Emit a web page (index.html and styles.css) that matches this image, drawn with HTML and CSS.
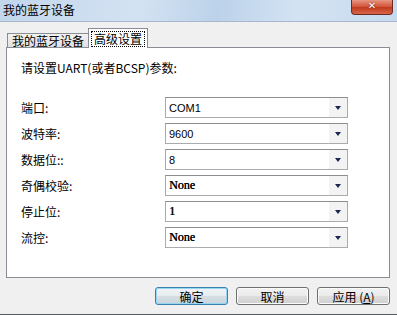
FILE: index.html
```html
<!DOCTYPE html>
<html>
<head>
    <title>我的蓝牙设备</title>
    <link rel="stylesheet" href="styles.css">
</head>
<body>
    <div id="window">
        <div class="titlebar">
            <span class="title">我的蓝牙设备</span>
            <span class="close">&#x2715;</span>
        </div>
        <div class="client">
            <div class="tabs">
                <div class="tab">我的蓝牙设备</div>
                <div class="tab active"><span class="focus">高级设置</span></div>
            </div>
            <div class="panel">
                <div class="intro">请设置UART(或者BCSP)参数:</div>
                <div class="fields">
                    <div class="row">
                        <span class="label">端口:</span>
                        <div class="combo"><span class="value sans">COM1</span><span class="arrow"></span></div>
                    </div>
                    <div class="row">
                        <span class="label">波特率:</span>
                        <div class="combo"><span class="value sans">9600</span><span class="arrow"></span></div>
                    </div>
                    <div class="row">
                        <span class="label">数据位::</span>
                        <div class="combo"><span class="value sans">8</span><span class="arrow"></span></div>
                    </div>
                    <div class="row">
                        <span class="label">奇偶校验:</span>
                        <div class="combo"><span class="value serif">None</span><span class="arrow"></span></div>
                    </div>
                    <div class="row">
                        <span class="label">停止位:</span>
                        <div class="combo"><span class="value serif">1</span><span class="arrow"></span></div>
                    </div>
                    <div class="row">
                        <span class="label">流控:</span>
                        <div class="combo"><span class="value serif">None</span><span class="arrow"></span></div>
                    </div>
                </div>
            </div>
            <div class="buttons">
                <button class="default">确定</button>
                <button>取消</button>
                <button>应用 (<u>A</u>)</button>
            </div>
        </div>
    </div>
</body>
</html>
```

FILE: styles.css
```css
body {
    margin: 0;
    font-family: "Noto Sans CJK SC", "Liberation Sans", sans-serif;
    font-size: 12px;
    color: #000;
    background-color: #f0f0f0;
}
#window {
    width: 397px;
    height: 315px;
    box-sizing: border-box;
    border-bottom: 1px solid #555b63;
    display: flex;
    flex-direction: column;
}
.titlebar {
    height: 22px;
    box-sizing: border-box;
    border-bottom: 1px solid #a8b8cc;
    background: linear-gradient(100deg, #c2d6ec 0%, #d3e2f2 35%, #bcd2ea 55%, #d4e3f3 75%, #c6d9ee 100%);
    display: flex;
    align-items: center;
    justify-content: space-between;
}
.title {
    margin-left: 3px;
    margin-top: -2px;
    font-size: 12px;
    line-height: 16px;
}
.close {
    align-self: flex-start;
    width: 42px;
    height: 16px;
    margin-top: -1px;
    margin-right: 4px;
    box-sizing: border-box;
    border: 1px solid #6b2b22;
    border-top: none;
    border-radius: 0 0 4px 4px;
    background: linear-gradient(#e9a08f, #d4553a 50%, #c03a1e 55%, #d86448);
    color: #fff;
    font-family: "DejaVu Sans", sans-serif;
    font-weight: bold;
    font-size: 10px;
    line-height: 14px;
    text-align: center;
    text-shadow: 0 0 2px #5a1a10;
}
.client {
    flex: 1;
    display: flex;
    flex-direction: column;
    padding: 6px 7px 0 6px;
}
.tabs {
    display: flex;
    align-items: flex-end;
    height: 20px;
    padding-left: 1px;
    position: relative;
    z-index: 1;
    margin-bottom: -1px;
}
.tab {
    height: 14px;
    box-sizing: border-box;
    padding: 0 4px;
    border: 1px solid #898c95;
    border-bottom: none;
    border-right: none;
    background: linear-gradient(#f2f2f2, #e0e0e0);
    line-height: 14px;
    font-size: 12px;
    margin-bottom: 1px;
}
.tab.active {
    height: 20px;
    padding: 2px 2px 0 2px;
    border-right: 1px solid #898c95;
    background: #fff;
    margin-bottom: 0;
    line-height: 15px;
}
.focus {
    display: inline-block;
    padding: 0 2px;
    border: 1px dotted #000;
    line-height: 14px;
}
.panel {
    height: 231px;
    box-sizing: border-box;
    border: 1px solid #898c95;
    background: #fff;
    padding: 12px 14px 0 14px;
}
.intro {
    line-height: 16px;
}
.fields {
    margin-top: 21px;
    display: flex;
    flex-direction: column;
    gap: 5px;
}
.row {
    display: flex;
    align-items: center;
    height: 21px;
}
.label {
    width: 144px;
    line-height: 16px;
}
.combo {
    width: 183px;
    height: 21px;
    box-sizing: border-box;
    border: 1px solid #a9abaf;
    border-top-color: #8b8d90;
    display: flex;
    align-items: center;
    justify-content: space-between;
}
.value {
    padding-left: 3px;
    font-size: 12px;
}
.sans {
    font-family: "Liberation Sans", sans-serif;
    font-size: 11px;
}
.serif {
    font-family: "Liberation Serif", serif;
    font-size: 12px;
    text-shadow: 0.4px 0 0 #000;
}
.arrow {
    width: 18px;
    height: 19px;
    background: #f3f3f3;
    display: flex;
    align-items: center;
    justify-content: center;
}
.arrow::after {
    content: "";
    border-left: 3.5px solid transparent;
    border-right: 3.5px solid transparent;
    border-top: 4px solid #1c2550;
}
.buttons {
    display: flex;
    justify-content: flex-end;
    gap: 8px;
    padding-top: 9px;
}
button {
    width: 73px;
    height: 18px;
    padding: 1px 0 0 0;
    font-family: "Noto Sans CJK SC", "Liberation Sans", sans-serif;
    font-size: 12px;
    line-height: 14px;
    color: #000;
    border: 1px solid #707070;
    border-radius: 3px;
    background: linear-gradient(#f2f2f2 0%, #ebebeb 48%, #dddddd 52%, #cfcfcf 100%);
    box-shadow: inset 0 0 0 1px #fbfbfb;
    cursor: pointer;
}
button.default {
    border-color: #3c7fb1;
    box-shadow: inset 0 0 0 1px #97d6f3;
    background: linear-gradient(#f0f4f7 0%, #e6ecf0 48%, #d7dfe5 52%, #c9d3da 100%);
}
```
